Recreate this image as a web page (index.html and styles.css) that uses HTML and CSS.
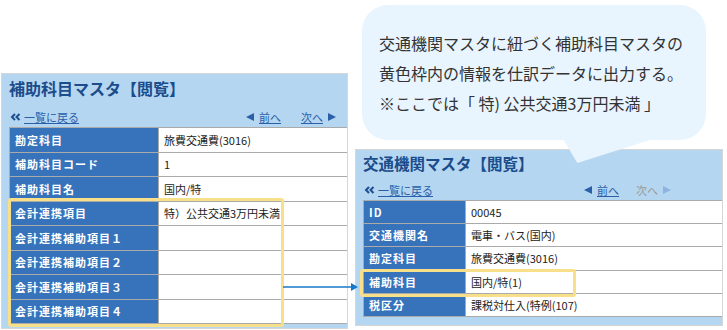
FILE: index.html
```html
<!DOCTYPE html>
<html lang="ja">
<head>
    <meta charset="UTF-8">
    <title>補助科目マスタと交通機関マスタ</title>
    <link rel="stylesheet" href="styles.css">
</head>
<body>
<div class="scene">
    <!-- 左：補助科目マスタ -->
    <section class="panel panel-sub">
        <h1 class="panel-title">補助科目マスタ【閲覧】</h1>
        <div class="panel-nav">
            <a class="back" href="#">
                <svg width="11" height="8" viewBox="0 0 11 8"><path d="M5 1 2 4 5 7M9.5 1 6.5 4 9.5 7" fill="none" stroke="#1d4f8f" stroke-width="2"/></svg>
                <span>一覧に戻る</span>
            </a>
            <div class="pager">
                <span class="tri tri-left"></span><a href="#">前へ</a>
                <a class="next" href="#">次へ</a><span class="tri tri-right"></span>
            </div>
        </div>
        <table class="detail">
            <tr><th>勘定科目</th><td>旅費交通費(3016)</td></tr>
            <tr><th>補助科目コード</th><td>1</td></tr>
            <tr><th>補助科目名</th><td>国内/特</td></tr>
            <tr><th>会計連携項目</th><td>特）公共交通3万円未満</td></tr>
            <tr><th>会計連携補助項目１</th><td></td></tr>
            <tr><th>会計連携補助項目２</th><td></td></tr>
            <tr><th>会計連携補助項目３</th><td></td></tr>
            <tr><th>会計連携補助項目４</th><td></td></tr>
        </table>
    </section>

    <div class="right-col">
        <div class="bubble">
            <p>交通機関マスタに紐づく補助科目マスタの<br>黄色枠内の情報を仕訳データに出力する。<br>※ここでは「 特) 公共交通3万円未満 」</p>
        </div>

        <!-- 右：交通機関マスタ -->
        <section class="panel panel-transit">
            <h1 class="panel-title">交通機関マスタ【閲覧】</h1>
            <div class="panel-nav">
                <a class="back" href="#">
                    <svg width="11" height="8" viewBox="0 0 11 8"><path d="M5 1 2 4 5 7M9.5 1 6.5 4 9.5 7" fill="none" stroke="#1d4f8f" stroke-width="2"/></svg>
                    <span>一覧に戻る</span>
                </a>
                <div class="pager">
                    <span class="tri tri-left"></span><a href="#">前へ</a>
                    <span class="next disabled">次へ</span><span class="tri tri-right disabled"></span>
                </div>
            </div>
            <table class="detail">
                <tr><th>ID</th><td>00045</td></tr>
                <tr><th>交通機関名</th><td>電車・バス(国内)</td></tr>
                <tr><th>勘定科目</th><td>旅費交通費(3016)</td></tr>
                <tr><th>補助科目</th><td>国内/特(1)</td></tr>
                <tr><th>税区分</th><td>課税対仕入(特例(107)</td></tr>
            </table>
        </section>
    </div>

    <!-- 黄色枠と矢印 -->
    <div class="highlight highlight-sub"></div>
    <div class="highlight highlight-transit"></div>
    <svg class="link-arrow" width="80" height="10" viewBox="0 0 80 10">
        <line x1="0" y1="5" x2="70" y2="5" stroke="#1878c8" stroke-width="1.5"/>
        <path d="M68 1 75 5 68 9Z" fill="#1878c8"/>
    </svg>
</div>
</body>
</html>
```

FILE: styles.css
```css
body {
    margin: 0;
    background: #fff;
    font-family: "Noto Sans CJK JP", "Noto Sans", sans-serif;
    color: #222;
}
.scene {
    position: relative;
    width: 727px;
    height: 330px;
    overflow: hidden;
    display: flex;
    align-items: flex-start;
    padding-left: 1px;
    box-sizing: border-box;
}
a {
    color: #2b5fa8;
}

/* panels */
.panel {
    background: #b5d6f0;
    border: 1px solid #d6d6d6;
    box-sizing: border-box;
    overflow: hidden;
}
.panel-sub {
    width: 347px;
    height: 256px;
    margin-top: 73px;
}
.panel-title {
    margin: 0;
    color: #1b4c8b;
    font-weight: bold;
    line-height: 20px;
}
.panel-sub .panel-title {
    font-size: 16px;
    padding: 4px 0 0 7px;
}
.panel-nav {
    display: flex;
    justify-content: space-between;
    align-items: center;
    font-size: 11px;
    line-height: 14px;
    padding-left: 8px;
}
.panel-sub .panel-nav {
    padding: 12px 11px 3px 8px;
}
.back {
    display: flex;
    align-items: center;
    gap: 3px;
    text-decoration: none;
}
.back span {
    text-decoration: underline;
}
.pager {
    display: flex;
    align-items: center;
}
.pager .next {
    margin-left: 20px;
}
.pager .disabled {
    color: #999;
}
.tri {
    width: 0;
    height: 0;
    border-top: 4px solid transparent;
    border-bottom: 4px solid transparent;
}
.tri-left {
    border-right: 8px solid #2b5fa8;
    margin-right: 5px;
}
.tri-right {
    border-left: 8px solid #2b5fa8;
    margin-left: 5px;
}
.tri-right.disabled {
    border-left-color: #8fb3e0;
}

/* detail tables */
.detail {
    border-collapse: collapse;
    margin-left: 7px;
    font-size: 11px;
}
.detail th,
.detail td {
    border: 1px solid #aaa;
    padding: 0 0 0 5px;
    text-align: left;
    white-space: nowrap;
}
.detail th {
    background: #3673ba;
    color: #fff;
    font-weight: bold;
    letter-spacing: 1px;
}
.detail td {
    background: #fff;
}
.panel-sub .detail {
    width: 345px;
}
.panel-sub .detail th {
    width: 143px;
    height: 23.5px;
}
.panel-transit .detail {
    width: 362px;
}
.panel-transit .detail th {
    width: 96px;
    height: 22.2px;
}

/* right column */
.right-col {
    margin-left: 7px;
    width: 368px;
}
.bubble {
    position: relative;
    z-index: 2;
    width: 344px;
    height: 135px;
    margin: 5px 0 0 7px;
    background: #e9f5fe;
    border-radius: 26px;
    box-sizing: border-box;
    padding: 23px 0 0 17px;
}
.bubble::after {
    content: "";
    position: absolute;
    left: 201px;
    top: 134px;
    width: 90px;
    height: 24px;
    background: #e9f5fe;
    clip-path: polygon(0 0, 100% 0, 16% 100%);
}
.bubble p {
    margin: 0;
    font-size: 16px;
    line-height: 30px;
    color: #333;
}
.panel-transit {
    margin-top: 9px;
    height: 177px;
}
.panel-transit .panel-title {
    font-size: 15.5px;
    padding: 3px 0 0 7px;
}
.panel-transit .panel-nav {
    padding: 10px 51px 3px 8px;
}
.panel-transit .pager .next {
    margin-left: 17px;
}

/* overlays */
.highlight {
    position: absolute;
    border: 3px solid #f8df8a;
    border-radius: 3px;
    box-sizing: border-box;
}
.highlight-sub {
    left: 8px;
    top: 198px;
    width: 276px;
    height: 129px;
}
.highlight-transit {
    left: 360px;
    top: 269px;
    width: 216px;
    height: 28px;
}
.link-arrow {
    position: absolute;
    left: 283px;
    top: 282px;
}
```
